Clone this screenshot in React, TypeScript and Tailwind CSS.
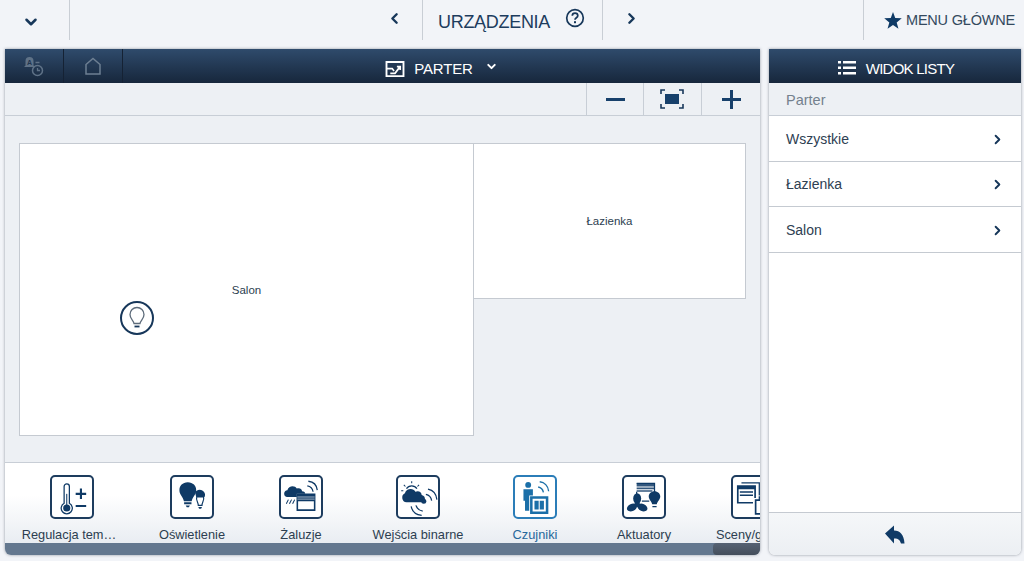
import { ChevronDown, ChevronLeft, ChevronRight } from "lucide-react";
import type { ReactNode } from "react";

const NAVY = "#0f3a66";

function ThermoIcon() {
  return (
    <>
      <path d="M12.500 26V10a2.500 2.500 0 0 1 5 0v16a5.300 5.300 0 1 1-5 0Z" fill="none" stroke={NAVY} strokeWidth="1.200" />
      <circle cx="15" cy="30.500" r="3.400" fill={NAVY} />
      <rect x="14.500" y="17" width="1" height="12" fill={NAVY} />
      <path d="M23.500 17h10M28.500 12v10M23.500 28.500h10" stroke={NAVY} strokeWidth="2" fill="none" />
    </>
  );
}

function BulbsIcon() {
  return (
    <>
      <path d="M24.500 20h6.500c1 3-1.500 5-1.500 8h-3.500c0-3-2.500-5-1.500-8Z" fill="#fff" stroke={NAVY} strokeWidth="1.100" />
      <path d="M23 16a4.800 4.800 0 1 1 9 4H24Z" fill={NAVY} />
      <path d="M16 6c5 0 8 3.500 8 7.500 0 4.500-3.500 6-4.300 10.500h-7.400C11.500 19.500 8 18 8 13.500 8 9.500 11 6 16 6Z" fill={NAVY} />
      <path d="M12.500 25h7v1.800h-7zM14 28h4l-1 1.800h-2z" fill={NAVY} />
      <path d="M26 29.500h3.500l-.8 1.600h-1.900z" fill={NAVY} />
    </>
  );
}

function BlindsIcon() {
  return (
    <>
      <path d="M6.500 20a3.300 3.300 0 0 1 .5-6.500c1-4 7-5 9-1.500 2-1 5 0 5 2.500 2 0 3 1 3 2.500h-8V20H6.500Z" fill={NAVY} />
      <path d="M8 22.500l-2 4M11 22.500l-2 4M14 22.500l-2 4" stroke={NAVY} strokeWidth="1" />
      <path d="M16.500 17.500h16.500V32.500H16.500z" fill="#fff" stroke={NAVY} strokeWidth="1.500" />
      <path d="M16.500 18h16.500v6H16.500z" fill={NAVY} />
      <path d="M16.500 20h16.500M16.500 22h16.500" stroke="#fff" strokeWidth=".6" />
      <path d="M26 9.500c3 .5 5 2.500 5.500 5.500M27 5c5 .5 8 4 8.500 8.500" fill="none" stroke={NAVY} strokeWidth="1.200" />
    </>
  );
}

function BinaryIcon() {
  return (
    <>
      <path d="M9 12a6 6 0 0 1 10 0" fill="none" stroke={NAVY} strokeWidth="1.200" />
      <path d="M14 5v2M6.500 8.500 8 10M21 8.500 19.500 10M4 14h2" stroke={NAVY} strokeWidth="1" />
      <path d="M9 25a4.500 4.500 0 0 1-1.500-8.500c1-4.500 8-5.500 10-1.500 3-1.500 6 .5 6 3 2.500 .5 3.500 2.500 3 4.500-.5 2-2 2.500-4 2.500H9Z" fill={NAVY} />
      <circle cx="25.500" cy="24" r="2.400" fill={NAVY} />
      <path d="M27.500 17.500c3 .5 5 3 5.500 6M29.500 12.500c5 1 8 5 8.500 10M18 28c1 3 3.500 5 6.500 5.500M13.500 29c1 5 5 8 10 8.500" fill="none" stroke={NAVY} strokeWidth="1.200" />
    </>
  );
}

function SensorIcon() {
  const blue = "#1b6fa8";
  return (
    <>
      <circle cx="13.500" cy="8.500" r="2.800" fill={blue} />
      <path d="M9 12.500h9v11h-1.500V33h-6v-9.500H9Z" fill={blue} />
      <path d="M14.500 18.500h18V36h-18z" fill="#fff" />
      <path d="M16.500 20.500h15V35h-15z" fill="#fff" stroke={blue} strokeWidth="2.400" />
      <path d="M19.500 23.500h4v8.500h-4zM24.500 23.500h4v8.500h-4z" fill={blue} />
      <path d="M23 10.500c2.500 .5 4.500 2.500 5 5M24.500 5.500c4.500 .5 8 4 8.500 9" fill="none" stroke={blue} strokeWidth="1.300" />
    </>
  );
}

function ActuatorIcon() {
  return (
    <>
      <path d="M13 7h17v12" fill="none" stroke={NAVY} strokeWidth="1.200" />
      <path d="M13 7h17v3H13zM13 11h17v1.500H13zM13 13.500h15V15H13z" fill={NAVY} opacity=".85" />
      <path d="M13 15v7M18 24h7" stroke={NAVY} strokeWidth="1.200" />
      <ellipse cx="13.500" cy="21.500" rx="3.800" ry="5" fill={NAVY} />
      <ellipse cx="8.500" cy="30" rx="5" ry="3.400" fill={NAVY} transform="rotate(-25 8.500 30)" />
      <ellipse cx="18.500" cy="30" rx="5" ry="3.400" fill={NAVY} transform="rotate(25 18.500 30)" />
      <circle cx="13.500" cy="27" r="2.600" fill={NAVY} />
      <path d="M30 14.500c3 0 5.500 2.300 5.500 5 0 3-2.800 4.500-3.300 7.500h-4.400c-.5-3-3.300-4.500-3.300-7.500 0-2.700 2.500-5 5.500-5Z" fill={NAVY} />
      <path d="M28 28.500h4v1.300h-4z" fill={NAVY} />
    </>
  );
}

function ScenesIcon() {
  return (
    <>
      <path d="M9 6.500h17v12" fill="none" stroke={NAVY} strokeWidth="1.200" />
      <path d="M5.500 9.500h16.500v16H5.500z" fill="#fff" stroke={NAVY} strokeWidth="1.600" />
      <path d="M5.500 9.500h16.500v3H5.500zM7.500 14.500h12.500V16H7.500zM7.500 17.500h12.500V19H7.500z" fill={NAVY} />
      <path d="M20 21h20v17H20z" fill="#fff" />
      <path d="M22.500 23h18v13h-18z" fill="#fff" stroke={NAVY} strokeWidth="1.600" />
      <path d="M26 23v-3h6v3" fill="none" stroke={NAVY} strokeWidth="1.200" />
    </>
  );
}

function DockItem({
  label,
  width,
  active,
  labelClass,
  children,
}: {
  label: string;
  width: string;
  active?: boolean;
  labelClass?: string;
  children: ReactNode;
}) {
  return (
    <div className={`flex shrink-0 flex-col items-center pt-[12px] ${width}`}>
      <div
        className={`h-[44px] w-[44px] overflow-hidden rounded-[5px] border-2 bg-white ${
          active ? "border-[#2b7db8]" : "border-[#1d3c5e]"
        }`}
      >
        <svg viewBox="0 0 40 40" className="-m-px h-[42px] w-[42px]">
          {children}
        </svg>
      </div>
      <span
        className={`mt-[8px] whitespace-nowrap text-[12.800px] leading-[15px] ${
          active ? "text-[#27679b]" : "text-[#2c3e50]"
        } ${labelClass ?? ""}`}
      >
        {label}
      </span>
    </div>
  );
}

function ZoomButton({ children, width }: { children: ReactNode; width: string }) {
  return <div className={`flex h-full items-center justify-center border-l border-[#c8ced6] ${width}`}>{children}</div>;
}

function ListRow({ label }: { label: string }) {
  return (
    <div className="flex h-[45.500px] items-center justify-between border-b border-[#c5cad1] pl-[17px] pr-[16px] pt-[2px] text-[14px] text-[#2e4052]">
      {label}
      <ChevronRight size={15} strokeWidth={3} color="#17375a" />
    </div>
  );
}

export default function App() {
  return (
    <div
      className="flex h-[561px] w-[1024px] flex-col overflow-hidden bg-[#f2f4f8] text-[#1d3c5e]"
      style={{ fontFamily: '"Liberation Sans", Arial, sans-serif' }}
    >
      {/* top bar */}
      <div className="flex h-[49px] shrink-0 items-start">
        <div className="flex h-[40px] w-[70px] items-center justify-center border-r border-[#c9ced5] pr-[8px] pt-[3px]">
          <ChevronDown size={18} strokeWidth={3.400} color="#17375a" />
        </div>
        <div className="flex h-[40px] w-[352px] items-center justify-end pb-[3px] pr-[19px]">
          <ChevronLeft size={17} strokeWidth={3.400} color="#17375a" />
        </div>
        <div className="flex h-[40px] w-[181px] items-center border-x border-[#c9ced5] pl-[15px] pt-[3px]">
          <span className="text-[18px] leading-none tracking-[-0.3px] text-[#1d3c5e]">URZĄDZENIA</span>
          <svg viewBox="0 0 20 20" className="mb-[7px] ml-[15px] h-[20px] w-[20px]">
            <circle cx="10" cy="10" r="8.300" fill="none" stroke="#17375a" strokeWidth="1.700" />
            <path d="M7.300 7.800c0-3.500 5.500-3.500 5.500 0 0 2-2.800 2-2.800 4" fill="none" stroke="#17375a" strokeWidth="1.700" />
            <rect x="9" y="13.200" width="2" height="2" fill="#17375a" />
          </svg>
        </div>
        <div className="flex h-[40px] flex-1 items-center pb-[3px] pl-[20px]">
          <ChevronRight size={17} strokeWidth={3.400} color="#17375a" />
        </div>
        <div className="flex h-[40px] w-[161px] items-center border-l border-[#c9ced5] pl-[20px] pt-[1px]">
          <svg viewBox="0 0 20 19" className="mb-[1px] h-[17px] w-[18px]">
            <path d="M10 0l2.500 6.800 7.300.3-5.700 4.500 2 7L10 14.600l-6.100 4 2-7L.2 7.100l7.300-.3Z" fill="#0f3a66" />
          </svg>
          <span className="ml-[4px] whitespace-nowrap text-[14.500px] tracking-[-0.2px] text-[#34495e]">MENU GŁÓWNE</span>
        </div>
      </div>

      <div className="flex min-h-0 flex-1 pb-[6px] pl-[5px] pr-[3px]">
        {/* main panel */}
        <div className="flex w-[755px] flex-col overflow-hidden rounded-b-[6px] bg-[#edf0f4] shadow-[0_0_3px_rgba(60,70,85,0.55)]">
          <div className="flex h-[34px] shrink-0 bg-gradient-to-b from-[#2f4b6c] to-[#17273c]">
            <div className="flex h-full w-[59px] items-center justify-center border-r border-[#152234]">
              <svg viewBox="0 0 24 24" className="h-[24px] w-[24px]">
                <path d="M3.500 11.500V7a4 4 0 0 1 8 0v4.500l1.500 1.500H2Z" fill="#5f7287" />
                <text x="7.500" y="10.500" textAnchor="middle" fontSize="7" fontWeight="700" fill="#1f3550">
                  A
                </text>
                <circle cx="15.500" cy="16.500" r="5" fill="none" stroke="#5f7287" strokeWidth="1.500" />
                <path d="M15.500 14v2.500h2.500M13.500 8.500h4" fill="none" stroke="#5f7287" strokeWidth="1.300" />
              </svg>
            </div>
            <div className="flex h-full w-[59px] items-center justify-center border-r border-[#152234]">
              <svg viewBox="0 0 20 20" className="h-[20px] w-[20px]">
                <path d="M3 8.500 10 2.500l7 6V18H3Z" fill="none" stroke="#6d7f92" strokeWidth="1.500" />
              </svg>
            </div>
            <div className="flex flex-1 items-center justify-center pt-[6px]">
              <svg viewBox="0 0 20 18" className="h-[17px] w-[20px]">
                <path d="M1 1h18v15H1z" fill="none" stroke="#fff" strokeWidth="2" />
                <path d="M1 8h6l2 2.500M5 13h5l5-6.500M12 6h3.500v3.500" fill="none" stroke="#fff" strokeWidth="1.800" />
              </svg>
              <span className="ml-[9px] text-[15px] tracking-[-0.2px] text-white">PARTER</span>
              <ChevronDown size={13} strokeWidth={3.600} color="#fff" className="mb-[6px] ml-[12px]" />
            </div>
          </div>

          <div className="flex h-[33px] shrink-0 justify-end border-b border-[#c8ced6]">
            <ZoomButton width="w-[57px]">
              <div className="h-[3px] w-[19px] bg-[#17406b]" />
            </ZoomButton>
            <ZoomButton width="w-[58px]">
              <svg viewBox="0 0 24 20" className="mr-[1px] h-[20px] w-[24px]">
                <path d="M1 5V1h4M19 1h4v4M23 15v4h-4M5 19H1v-4" fill="none" stroke="#17375a" strokeWidth="1.600" />
                <rect x="5" y="5" width="14" height="10" fill="#17406b" />
              </svg>
            </ZoomButton>
            <ZoomButton width="w-[59px]">
              <div className="relative h-[19px] w-[19px]">
                <div className="absolute left-0 top-[8px] h-[3px] w-[19px] bg-[#17406b]" />
                <div className="absolute left-[8px] top-0 h-[19px] w-[3px] bg-[#17406b]" />
              </div>
            </ZoomButton>
          </div>

          {/* floor plan */}
          <div className="relative min-h-0 flex-1">
            <div className="absolute left-[14px] top-[27px] flex h-[293px] w-[455px] items-center justify-center border border-[#c5cad1] bg-white pt-[3px] text-[11.500px] text-[#2c3e50]">
              Salon
            </div>
            <div className="absolute left-[468px] top-[27px] flex h-[156px] w-[273px] items-center justify-center border border-[#c5cad1] bg-white pt-[2px] text-[11.500px] text-[#2c3e50]">
              Łazienka
            </div>
            <div className="absolute left-[115px] top-[185px] flex h-[34px] w-[34px] items-center justify-center rounded-full border-2 border-[#17375a] bg-white">
              <svg viewBox="0 0 20 24" className="h-[25px] w-[20px]">
                <path d="M7 17c-.5-3-4-4.500-4-9a7 7 0 0 1 14 0c0 4.500-3.500 6-4 9Z" fill="none" stroke="#5d6b7a" strokeWidth="1.300" />
                <path d="M7.500 20h5" stroke="#17375a" strokeWidth="1.800" />
              </svg>
            </div>
          </div>

          {/* device category dock */}
          <div className="flex h-[81px] shrink-0 overflow-hidden border-t border-[#c8ced6] bg-gradient-to-b from-white from-40% to-[#e9edf2]">
            <DockItem label="Regulacja tem…" width="w-[134px]" labelClass="mr-[6px]">
              <ThermoIcon />
            </DockItem>
            <DockItem label="Oświetlenie" width="w-[106px]">
              <BulbsIcon />
            </DockItem>
            <DockItem label="Żaluzje" width="w-[112px]">
              <BlindsIcon />
            </DockItem>
            <DockItem label="Wejścia binarne" width="w-[122px]">
              <BinaryIcon />
            </DockItem>
            <DockItem label="Czujniki" width="w-[112px]" active>
              <SensorIcon />
            </DockItem>
            <DockItem label="Aktuatory" width="w-[106px]">
              <ActuatorIcon />
            </DockItem>
            <DockItem label="Sceny/grupy" width="w-[112px]" labelClass="mr-[3px]">
              <ScenesIcon />
            </DockItem>
          </div>
          <div className="flex h-[12px] shrink-0 bg-[#64788f]">
            <div className="flex-1" />
            <div className="w-[47px] rounded-l-[4px] bg-gradient-to-b from-[#566273] to-[#454f5c]" />
          </div>
        </div>

        {/* list panel */}
        <div className="ml-[9px] flex w-[252px] flex-col overflow-hidden rounded-b-[6px] bg-white shadow-[0_0_3px_rgba(60,70,85,0.55)]">
          <div className="flex h-[34px] shrink-0 items-center justify-center bg-gradient-to-b from-[#2f4b6c] to-[#17273c] pl-[2px] pt-[6px]">
            <svg viewBox="0 0 18 14" className="mb-[3px] h-[14px] w-[18px]">
              <path d="M0 0h3v2.500H0zM5 0h13v2.500H5zM0 5.500h3V8H0zM5 5.500h13V8H5zM0 11h3v2.500H0zM5 11h13v2.500H5z" fill="#fff" />
            </svg>
            <span className="ml-[10px] text-[15px] tracking-[-0.75px] text-white">WIDOK LISTY</span>
          </div>
          <div className="flex h-[33px] shrink-0 items-center border-b border-[#c8ced6] bg-[#edf0f4] pl-[17px] pt-[4px] text-[14.500px] text-[#74818e]">
            Parter
          </div>
          <ListRow label="Wszystkie" />
          <ListRow label="Łazienka" />
          <ListRow label="Salon" />
          <div className="flex-1" />
          <div className="flex h-[43px] shrink-0 items-center justify-center border-t border-[#c5cad1] bg-gradient-to-b from-[#f5f7f9] to-[#eceff3]">
            <svg viewBox="0 0 20 18" className="h-[19px] w-[20px]">
              <path d="M0 8 9 0v5c6 0 10 4 10.500 13H16c-1-3-2-5-7-5v5Z" fill="#0f3a66" />
            </svg>
          </div>
        </div>
      </div>
    </div>
  );
}
